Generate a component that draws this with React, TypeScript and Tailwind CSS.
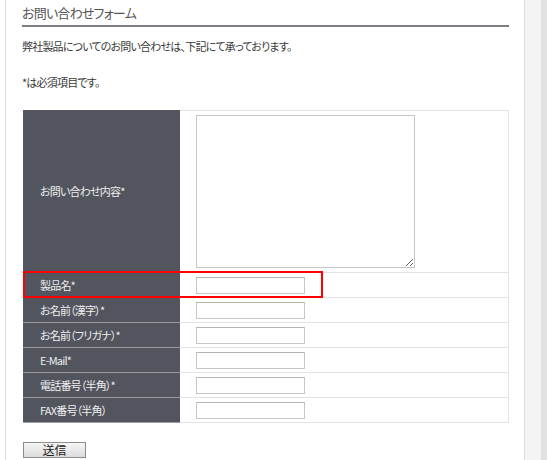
const fields = [
  { label: "製品名*", mark: true },
  { label: "お名前（漢字）*" },
  { label: "お名前（フリガナ）*" },
  { label: "E-Mail*" },
  { label: "電話番号（半角）*" },
  { label: "FAX番号（半角）" },
];

export default function App() {
  return (
    <div className="flex h-[460px] w-[547px] overflow-hidden bg-white font-['Noto_Sans_CJK_JP',sans-serif] text-[11px] tracking-[-0.8px] text-[#3a3a3a] [font-feature-settings:'palt']">
      <div className="ml-[5px] h-full w-[520px] border-x border-[#dcdcdc] pl-[16px]">
        <h2 className="w-[487px] border-b-2 border-[#7b7f84] pb-[2px] pt-[3px] text-[13px] leading-[20px] font-normal text-[#555]">
          お問い合わせフォーム
        </h2>
        <p className="mt-[10px] leading-[18px]">
          弊社製品についてのお問い合わせは、下記にて承っております。
        </p>
        <p className="mt-[18px] leading-[18px]">*は必須項目です。</p>

        <div className="ml-px mt-[19px] w-[486px]">
          <div className="flex h-[163px]">
            <div className="flex w-[157px] items-center border-b border-[#9a9ca1] bg-[#52555e] pl-[17px] text-[#eeeeee]">
              お問い合わせ内容*
            </div>
            <div className="flex-1 border-y border-r border-[#e3e3e3] pl-[16px] pt-[4px]">
              <textarea className="block h-[153px] w-[219px] resize border border-[#c6c6c6] bg-white outline-none" />
            </div>
          </div>
          {fields.map((f) => (
            <div key={f.label} className="relative flex h-[25px]">
              <div className="flex w-[157px] items-center border-b border-[#9a9ca1] bg-[#52555e] pl-[17px] text-[#eeeeee]">
                {f.label}
              </div>
              <div className="flex flex-1 items-center border-b border-r border-[#e3e3e3] pl-[16px]">
                <input
                  type="text"
                  className="block h-[17px] w-[109px] border border-[#c6c6c6] border-t-[#b5b5b5] bg-white outline-none"
                />
              </div>
              {f.mark && (
                <div className="absolute left-0 top-[-2px] h-[27px] w-[300px] border-2 border-[#ff0000]" />
              )}
            </div>
          ))}
        </div>

        <button className="ml-px mt-[19px] flex h-[16px] w-[63px] items-center justify-center border border-[#8c8c8c] bg-[linear-gradient(#f6f6f6,#dcdcdc)] text-[12px] leading-none tracking-normal text-[#222]">
          送信
        </button>
      </div>
      <div className="h-full w-[16px] bg-[#f4f4f4]" />
      <div className="h-full flex-1 bg-[#e2e2e2]" />
    </div>
  );
}
